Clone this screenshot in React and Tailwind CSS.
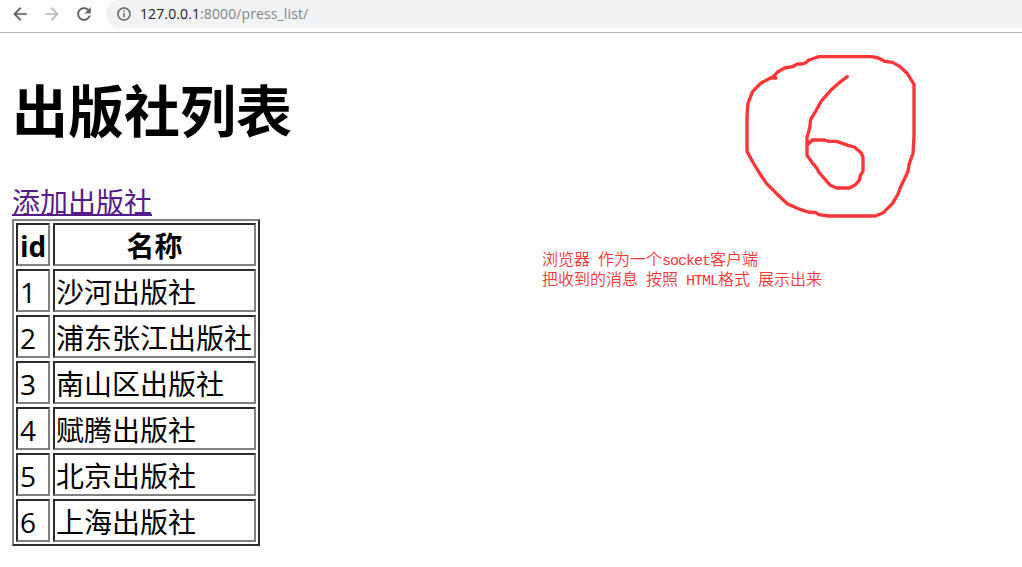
const presses = [
  [1, '沙河出版社'],
  [2, '浦东张江出版社'],
  [3, '南山区出版社'],
  [4, '赋腾出版社'],
  [5, '北京出版社'],
  [6, '上海出版社'],
];

const cell =
  'flex h-[43px] items-start border-2 border-t-[#2c2c2c] border-l-[#2c2c2c] border-r-[#808080] border-b-[#808080] p-0 pt-[2px] leading-[38px] whitespace-nowrap';

function Icon({ d, className }) {
  return (
    <svg viewBox="0 0 24 24" className={className} fill="currentColor" stroke="currentColor" strokeWidth="0.3">
      <path d={d} />
    </svg>
  );
}

function Toolbar() {
  return (
    <header className="flex h-[33px] items-start border-b border-[#b6b6b6] pl-[10px] text-[#5f6368]">
      <Icon className="mt-[4px] h-5 w-5" d="M20 11H7.83l5.59-5.59L12 4l-8 8 8 8 1.41-1.41L7.83 13H20v-2z" />
      <Icon className="mt-[4px] ml-3 h-5 w-5 text-[#babcbe]" d="M12 4l-1.41 1.41L16.17 11H4v2h12.17l-5.58 5.59L12 20l8-8z" />
      <Icon
        className="mt-[4px] ml-3 h-5 w-5"
        d="M17.65 6.35C16.2 4.9 14.21 4 12 4c-4.42 0-7.99 3.58-7.99 8s3.57 8 7.99 8c3.73 0 6.84-2.55 7.73-6h-2.08c-.82 2.33-3.04 4-5.65 4-3.31 0-6-2.69-6-6s2.69-6 6-6c1.66 0 3.14.69 4.22 1.78L13 11h7V4l-2.35 2.35z"
      />
      <div className="ml-3 flex h-[28px] flex-1 items-center rounded-bl-[14px] rounded-tl-[14px] bg-[#f1f3f4] pl-[10px]">
        <Icon
          className="h-4 w-4"
          d="M11 7h2v2h-2zm0 4h2v6h-2zm1-9C6.48 2 2 6.48 2 12s4.48 10 10 10 10-4.48 10-10S17.52 2 12 2zm0 18c-4.41 0-8-3.59-8-8s3.59-8 8-8 8 3.59 8 8-3.59 8-8 8z"
        />
        <span className="ml-2 font-['Open_Sans','Noto_Sans',sans-serif] text-[14px] leading-5 tracking-[0.11px] text-[#80868b]">
          <span className="text-[#202124]">127.0.0.1</span>:8000/press_list/
        </span>
      </div>
    </header>
  );
}

function PressTable() {
  return (
    <table className="grid h-[327px] w-[248px] grid-cols-[34px_203px] content-start gap-[3px] border-2 border-t-[#808080] border-l-[#808080] border-r-[#2c2c2c] border-b-[#2c2c2c] p-[2px]">
      <tbody className="contents">
        <tr className="contents">
          <th className={`${cell} pl-[2px] font-bold`}>id</th>
          <th className={`${cell} justify-center font-bold`}>名称</th>
        </tr>
        {presses.map(([id, name]) => (
          <tr key={id} className="contents">
            <td className={`${cell} pl-[2px] tracking-[-0.5px]`}>{id}</td>
            <td className={`${cell} pl-px`}>{name}</td>
          </tr>
        ))}
      </tbody>
    </table>
  );
}

function Sketch() {
  return (
    <svg width="200" height="190" viewBox="0 0 600 570" fill="none" stroke="#fb3636" strokeWidth="10" strokeLinecap="round" strokeLinejoin="round">
      <path d="M138 114H121L92 130L68 154L54 190L51 228V334L70 369L90 402L110 431L140 461L172 491L202 505L234 516L257 518L267 524L297 528H436L460 518L487 491L504 462L512 440L533 397L538 371L549 340L552 290V133L530 98L510 80L488 67L464 64L445 54L425 50H267L236 60L228 68L216 72H202L187 80L164 84L144 95L128 112" />
      <path d="M352 110L328 128L302 151L274 183L257 214L242 238L239 264L231 292V346L248 370L261 385L266 396L301 436L320 444H358L374 436L388 421L391 407L399 393V352L394 339L373 321L356 317L320 304H296L284 300H247L235 312" />
    </svg>
  );
}

function Mono({ children }) {
  return <span className="font-['Liberation_Mono',monospace] text-[15px] leading-none font-normal tracking-[-1px]">{children}</span>;
}

export default function App() {
  return (
    <div className="h-[567px] w-[1022px] overflow-hidden bg-white text-black">
      <Toolbar />
      <main className="flex font-['Open_Sans','Noto_Sans_CJK_SC',sans-serif] text-[28px]">
        <section className="w-[530px] pl-3">
          <h1 className="mt-[39px] h-[76px] text-[56px] leading-[76px] font-bold">出版社列表</h1>
          <div className="mt-[36px] h-[35px] leading-[37px]">
            <a href="#add" className="text-[#551a8b] underline decoration-2 underline-offset-[1px] [text-decoration-skip-ink:none]">
              添加出版社
            </a>
          </div>
          <PressTable />
        </section>
        <aside className="pl-3 pt-[7px]">
          <div className="ml-[188px] h-[190px]">
            <Sketch />
          </div>
          <div className="mt-[18px] font-['Noto_Sans_CJK_SC',sans-serif] text-[16px] leading-5 font-[350] whitespace-pre text-[#fb3636]">
            <p className="h-5">
              浏览器<Mono> </Mono>作为一个<Mono>socket</Mono>客户端
            </p>
            <p className="h-5">
              把收到的消息<Mono> </Mono>按照<Mono> HTML</Mono>格式<Mono> </Mono>展示出来
            </p>
          </div>
        </aside>
      </main>
    </div>
  );
}
